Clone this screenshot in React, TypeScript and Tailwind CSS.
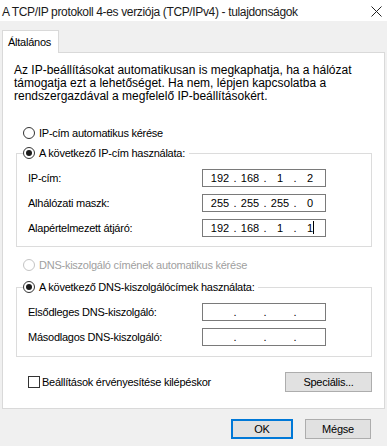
import { Fragment } from "react";

function Radio({ checked, disabled }: { checked?: boolean; disabled?: boolean }) {
  return (
    <span
      className={`w-[12px] h-[12px] rounded-full border bg-white flex items-center justify-center shrink-0 ${
        disabled ? "border-[#c4c4c4]" : "border-[#333333]"
      }`}
    >
      {checked && <span className="w-[6px] h-[6px] rounded-full bg-[#1a1a1a]" />}
    </span>
  );
}

function IpField({ parts, cursor }: { parts: string[]; cursor?: boolean }) {
  return (
    <div className="w-[124px] h-[18px] border border-[#7a7a7a] bg-white flex items-center pl-[4px] text-[11px] leading-none tracking-normal">
      {parts.map((p, i) => (
        <Fragment key={i}>
          <span className="w-[26px] text-center relative">
            {p}
            {cursor && i === 3 && (
              <span className="absolute left-[16px] top-[-2px] w-px h-[13px] bg-black" />
            )}
          </span>
          {i < 3 && <span className="w-[4px] text-center">.</span>}
        </Fragment>
      ))}
    </div>
  );
}

function Row({ label, parts, cursor }: { label: string; parts: string[]; cursor?: boolean }) {
  return (
    <div className="flex items-center h-[18px]">
      <span className="w-[174px]">{label}</span>
      <IpField parts={parts} cursor={cursor} />
    </div>
  );
}

export default function App() {
  return (
    <div className="w-[387px] h-[446px] bg-[#f0f0f0] flex flex-col font-['Liberation_Sans',Arial,sans-serif] text-[11px] tracking-[-0.25px] text-black overflow-hidden">
      <div className="h-[21px] bg-white flex items-center justify-between pl-[2px] pr-[5px]">
        <span className="text-[12px] tracking-[-0.35px] text-[#1a1a1a] pt-[2px]">
          A TCP/IP protokoll 4-es verziója (TCP/IPv4) - tulajdonságok
        </span>
        <svg width="11" height="11" viewBox="0 0 11 11" className="mt-[2px]">
          <path d="M0.5 0.5 L10.5 10.5 M10.5 0.5 L0.5 10.5" stroke="#222" strokeWidth="1" />
        </svg>
      </div>
      <div className="pt-[9px]">
        <div className="ml-[2px] w-[57px] h-[23px] border border-b-0 border-[#d9d9d9] bg-white relative z-10 -mb-px flex items-center pl-[5px] pt-[1px]">
          Általános
        </div>
        <div className="mx-[2px] h-[357px] border border-[#d9d9d9] bg-white px-[11px] flex flex-col">
          <p className="pt-[11px] leading-[13px] text-[12px] tracking-normal">
            Az IP-beállításokat automatikusan is megkaphatja, ha a hálózat
            <br />
            támogatja ezt a lehetőséget. Ha nem, lépjen kapcsolatba a
            <br />
            rendszergazdával a megfelelő IP-beállításokért.
          </p>
          <div className="ml-[9px] mt-[23px] h-[14px] flex items-center gap-[4px]">
            <Radio />
            <span>IP-cím automatikus kérése</span>
          </div>
          <fieldset className="ml-[2px] mt-[6px] w-[356px] border border-[#dcdcdc]">
            <legend className="ml-[6px] bg-white">
              <div className="h-[14px] flex items-center gap-[4px] pr-[4px]">
                <Radio checked />
                <span>A következő IP-cím használata:</span>
              </div>
            </legend>
            <div className="pl-[11px] pt-[9px] pb-[9px] flex flex-col gap-[7px]">
              <Row label="IP-cím:" parts={["192", "168", "1", "2"]} />
              <Row label="Alhálózati maszk:" parts={["255", "255", "255", "0"]} />
              <Row label="Alapértelmezett átjáró:" parts={["192", "168", "1", "1"]} cursor />
            </div>
          </fieldset>
          <div className="ml-[9px] mt-[11px] h-[14px] flex items-center gap-[4px] text-[#a0a0a0]">
            <Radio disabled />
            <span>DNS-kiszolgáló címének automatikus kérése</span>
          </div>
          <fieldset className="ml-[2px] mt-[8px] w-[356px] border border-[#dcdcdc]">
            <legend className="ml-[6px] bg-white">
              <div className="h-[14px] flex items-center gap-[4px] pr-[4px]">
                <Radio checked />
                <span>A következő DNS-kiszolgálócímek használata:</span>
              </div>
            </legend>
            <div className="pl-[11px] pt-[9px] pb-[10px] flex flex-col gap-[7px]">
              <Row label="Elsődleges DNS-kiszolgáló:" parts={["", "", "", ""]} />
              <Row label="Másodlagos DNS-kiszolgáló:" parts={["", "", "", ""]} />
            </div>
          </fieldset>
          <div className="mt-[15px] h-[20px] flex items-center justify-between pl-[14px] pr-[1px]">
            <div className="flex items-center gap-[2px]">
              <span className="w-[12px] h-[12px] border border-[#333333] bg-white" />
              <span>Beállítások érvényesítése kilépéskor</span>
            </div>
            <button className="w-[87px] h-[20px] bg-[#e1e1e1] border border-[#adadad] text-[11px]">
              Speciális...
            </button>
          </div>
        </div>
      </div>
      <div className="mt-[10px] flex justify-end gap-[12px] pr-[16px]">
        <button className="w-[62px] h-[20px] bg-[#e1e1e1] border-2 border-[#0078d7] text-[11px]">OK</button>
        <button className="w-[66px] h-[20px] bg-[#e1e1e1] border border-[#adadad] text-[11px]">Mégse</button>
      </div>
    </div>
  );
}
